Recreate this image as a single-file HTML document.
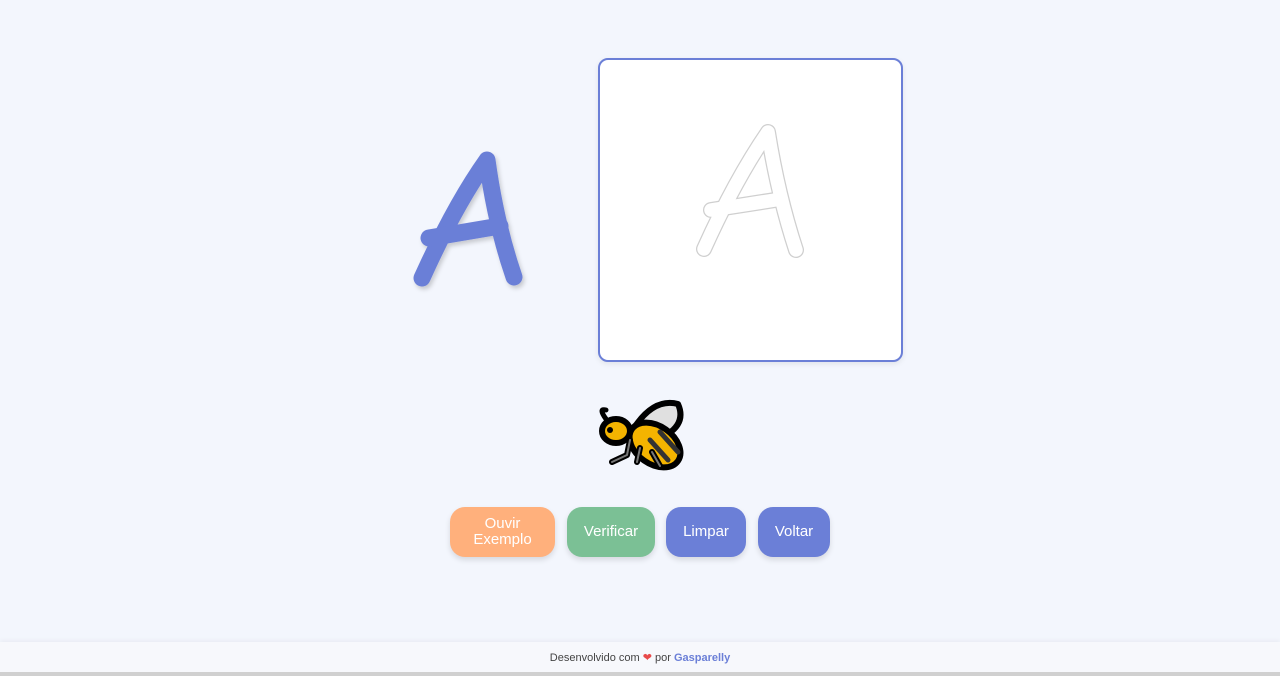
<!DOCTYPE html>
<html><head><meta charset="utf-8"><style>
html,body{margin:0;padding:0;width:1280px;height:676px;overflow:hidden;background:#f3f6fd;font-family:"Liberation Sans",sans-serif;}
.box{position:absolute;left:598px;top:58px;width:301px;height:300px;background:#fff;border:2px solid #6b7fd7;border-radius:10px;box-shadow:0 2px 6px rgba(0,0,0,0.08);}
.btn{position:absolute;top:507px;height:50px;border-radius:15px;color:#fff;font-size:15px;display:flex;align-items:center;justify-content:center;text-align:center;line-height:16px;box-shadow:0 3px 6px rgba(0,0,0,0.12);}
.footer{position:absolute;left:0;top:642px;width:1280px;height:30px;background:#f7f8fc;box-shadow:0 -2px 4px rgba(0,0,0,0.04);text-align:center;font-size:11px;line-height:32px;color:#444;font-family:"Liberation Sans Narrow","Liberation Sans",sans-serif;}
.footer b{color:#6b7fd7;}
.bar{position:absolute;left:0;top:672px;width:1280px;height:4px;background:#d0d0d0;}
</style></head><body>
<svg style="position:absolute;left:0;top:0" width="1280" height="676">
<defs><filter id="sh" x="-20%" y="-20%" width="140%" height="140%"><feDropShadow dx="2" dy="3" stdDeviation="2" flood-color="#000" flood-opacity="0.18"/></filter></defs>
<g filter="url(#sh)" stroke="#6b7fd7" stroke-width="17" fill="none" stroke-linecap="round" stroke-linejoin="round">
<path d="M422 278 Q455 205 487 160 Q496 225 514 277"/>
<path d="M429 238 L500 226"/>
</g>
</svg>
<div class="box"></div>
<svg style="position:absolute;left:0;top:0" width="1280" height="676">
<g fill="none" stroke-linecap="round" stroke-linejoin="round">
<g stroke="#cfcfcf" stroke-width="16">
<path d="M704 249 Q735 180 768 132 Q778 195 796 250"/><path d="M711 210 L775 200"/>
</g>
<g stroke="#fff" stroke-width="13.5">
<path d="M704 249 Q735 180 768 132 Q778 195 796 250"/><path d="M711 210 L775 200"/>
</g>
</g>
<g stroke-linecap="round" stroke-linejoin="round">
<path d="M636 425 Q655 398 678 404 Q686 422 668 434 Z" fill="#e0e0e0" stroke="#000" stroke-width="6"/>
<ellipse cx="655" cy="445" rx="28" ry="19" transform="rotate(35 655 445)" fill="#f4b400" stroke="#000" stroke-width="6"/>
<ellipse cx="616" cy="431" rx="14" ry="12" fill="#f4b400" stroke="#000" stroke-width="6"/>
<path d="M606 419 Q598 408 606 410" stroke="#000" stroke-width="5" fill="none"/>
<path d="M650 440 L668 460 M660 432 L678 452" stroke="#333" stroke-width="5"/>
<path d="M630 440 L627 455 L612 462 M640 448 L637 462 M652 452 L660 466" stroke="#000" stroke-width="6" fill="none"/>
<path d="M630 440 L627 455 L612 462 M640 448 L637 462 M652 452 L660 466" stroke="#777" stroke-width="2" fill="none"/>
<circle cx="610" cy="430" r="3" fill="#000"/>
</g>
</svg>
<div class="btn" style="left:450px;width:105px;background:#ffb07c">Ouvir<br>Exemplo</div>
<div class="btn" style="left:567px;width:88px;background:#7bc095">Verificar</div>
<div class="btn" style="left:666px;width:80px;background:#6b7fd7">Limpar</div>
<div class="btn" style="left:758px;width:72px;background:#6b7fd7">Voltar</div>
<div class="footer">Desenvolvido com <span style="color:#e84a4a">❤</span> por <b>Gasparelly</b></div>
<div class="bar"></div>
</body></html>
